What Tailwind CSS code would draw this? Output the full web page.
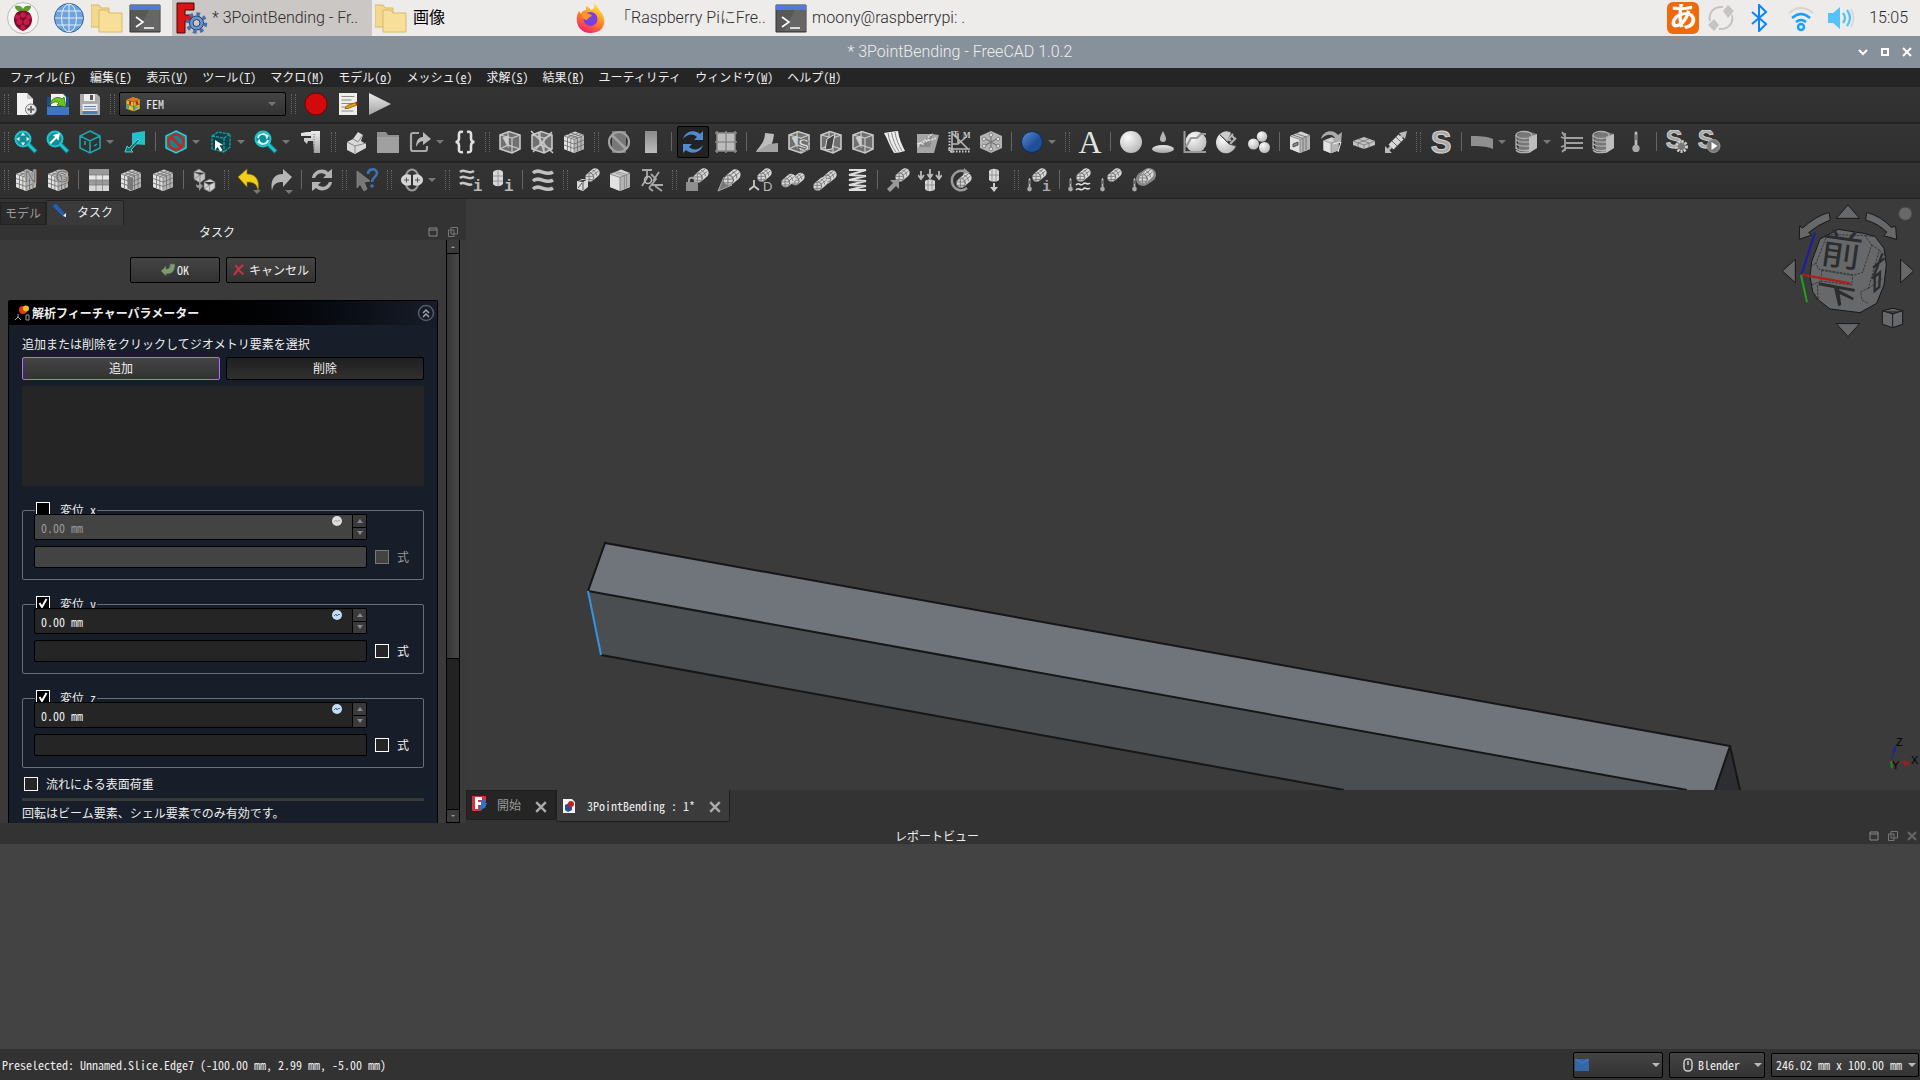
<!DOCTYPE html>
<html lang="ja">
<head>
    <meta charset="UTF-8">
    <script src="https://cdn.jsdelivr.net/npm/@tailwindcss/browser@4"></script>
    <title>3PointBending - FreeCAD 1.0.2</title>
</head>
<body class="h-screen flex flex-col overflow-hidden bg-[#333] text-[#eee] text-xs leading-4 font-['Noto_Sans_CJK_JP',sans-serif]">

    <!--Gradients-->
    <svg class="absolute w-0 h-0" aria-hidden="true">
        <defs>
            <linearGradient id="g" x1="0" y1="0" x2="0" y2="1"><stop offset="0" stop-color="#ececec"/><stop offset="1" stop-color="#a2a2a2"/></linearGradient>
            <linearGradient id="gd" x1="0" y1="0" x2="0" y2="1"><stop offset="0" stop-color="#8a8a8a"/><stop offset="1" stop-color="#bdbdbd"/></linearGradient>
            <radialGradient id="ball" cx=".35" cy=".3" r=".8"><stop offset="0" stop-color="#fafafa"/><stop offset="1" stop-color="#b4b4b4"/></radialGradient>
            <linearGradient id="blue" x1="0" y1="0" x2="1" y2="1"><stop offset="0" stop-color="#5a8fd4"/><stop offset=".6" stop-color="#1f4f98"/></linearGradient>
            <linearGradient id="fire" x1=".8" y1="0" x2=".3" y2="1"><stop offset="0" stop-color="#fff44f"/><stop offset=".5" stop-color="#ff8a1f"/><stop offset="1" stop-color="#f0206e"/></linearGradient>
        </defs>
    </svg>

    <!--Icon definitions-->
    <svg class="hidden" aria-hidden="true">
        <!--shared parts-->
        <symbol id="mcyl" viewBox="1 2 22 20"><path d="M8 15.500 16 8.500" stroke="#d8d8d8" stroke-width="13" stroke-linecap="round"/><g fill="none" stroke="#6c6c6c" stroke-width="1.100"><circle cx="7.500" cy="15.500" r="6"/><path d="M7 9.500v12M2 14h11M3 18.500h10M8 8c4 1 6 5 6 9M12 5c4 1 6 4 6 8M10 9l8-6M13 12l8-6"/></g></symbol>
        <symbol id="thermo" viewBox="0 0 8 24"><path d="M4 2v16" stroke="#bbb" stroke-width="3" stroke-linecap="round"/><path d="M4 4v6" stroke="#333" stroke-width="1"/><circle cx="4" cy="19" r="4" fill="#aaa"/></symbol>
        <symbol id="box" viewBox="0 0 24 24"><path d="M2 6 13 1.500 22 5v14l-10 4L2 19z" fill="#d2d2d2"/><path d="M2 6l10 3.500V23L2 19z" fill="#e2e2e2"/><path d="M12 9.500 22 5v14l-10 4z" fill="#b4b4b4"/><path d="M2 6l10 3.500L22 5M12 9.500V23" fill="none" stroke="#777" stroke-width=".8"/></symbol>
        <symbol id="mesh" viewBox="0 0 24 24"><use href="#box"/><path d="M2 10.500l10 3.500 10-4M2 15l10 3.500 10-4M5.500 7.500v13M8.800 8.500V22M15.500 8v13.500M19 6.500V20M5.500 4.500l10.500 3.500M9 3l10.500 3.500M5.500 7.300 16.500 3M9 8.600 19.500 4" fill="none" stroke="#6c6c6c" stroke-width=".8"/></symbol>
        <symbol id="mag" viewBox="0 0 24 24"><path d="M14 14l8 8" stroke="#0c6f75" stroke-width="5"/><path d="M14 14l7.500 7.500" stroke="#22c3cb" stroke-width="3"/><circle cx="9" cy="9" r="7.500" fill="#0e8f97" stroke="#22c3cb" stroke-width="2"/></symbol>
        <symbol id="wire" viewBox="0 0 24 24"><path d="M2 5 11 1.500 22 5v14l-8 4L2 19z" fill="#707070" stroke="#c8c8c8" stroke-width="1.600"/><path d="M2 5l12 3 8-3M14 8v15M2 19l8-4 12 4M10 15V2" fill="none" stroke="#c8c8c8" stroke-width="1.200"/></symbol>

        <!--file-->
        <symbol id="new" viewBox="0 0 24 24"><path d="M3 1h10l6 6v16H3z" fill="#f2f2f2"/><path d="M13 1v6h6z" fill="#c8c8c8"/><circle cx="17" cy="17.500" r="5.500" fill="#e8e8e8" stroke="#777"/><path d="M17 14v7M13.500 17.500h7" stroke="#666" stroke-width="1.800"/></symbol>
        <symbol id="open" viewBox="0 0 24 24"><path d="M1 5h4V1h13l3 4h2v18H1z" fill="#1d4c8c"/><path d="M5 2h12l3 3v9H5z" fill="#f2f2f2"/><path d="M1 15h22v8H1z" fill="#3d77bd"/><path d="M4 13c1-8 9-9 12-6l2-2 2 10-9-2 2-2c-3-2-6-1-9 2z" fill="#6cc020" stroke="#357010" stroke-width=".8"/></symbol>
        <symbol id="save" viewBox="0 0 24 24"><path d="M2 2h17l3 3v18H2z" fill="#a9a9a9"/><path d="M6 2h11v7H6z" fill="#eee"/><path d="M12 3h3v5h-3z" fill="#555"/><path d="M4.500 12h15v9h-15z" fill="#eaeaea"/><path d="M6 14.500h12M6 17h12" stroke="#5d83b5"/><path d="M4.500 19h15v3h-15z" fill="#4d7cb8"/></symbol>
        <symbol id="fem" viewBox="0 0 24 24"><path d="M2 6 12 2l10 3v14l-9 4L2 19z" fill="#e8c020"/><path d="M2 6l11 3 9-4-10-3z" fill="#e8761c"/><path d="M6 8h3v5H6zM16 8h4v5h-4z" fill="#d01818"/><path d="M2 14h4v5H2zM13 16h8l-8 6z" fill="#35a5c0"/><path d="M2 6l11 3v14M13 9l9-4M2 12l11 4 9-4" fill="none" stroke="#444" stroke-width=".8"/></symbol>
        <symbol id="rec" viewBox="0 0 24 24"><circle cx="12" cy="12" r="11" fill="#d40a0a" stroke="#6d0404"/></symbol>
        <symbol id="macro" viewBox="0 0 24 24"><path d="M3 1h18v22H3z" fill="#efefe8"/><path d="M5.500 4.500h13M5.500 8h10M5.500 11.500h12M5.500 15h5M5.500 19h12" stroke="#888"/><path d="M9 16.500l2-3 9-3 1 2.500-9 3.500z" fill="#e5a50a" stroke="#7a3c05" stroke-width=".7"/><path d="M19.500 10l2-.5.500 2.500-2 .5z" fill="#c21818"/></symbol>
        <symbol id="play" viewBox="0 0 24 24"><path d="M1 1l22 11L1 23z" fill="url(#g)"/></symbol>

        <!--view-->
        <symbol id="fitall" viewBox="0 0 24 24"><use href="#mag"/><path d="M9 2.500l2.200 3H6.800zM9 15.500l2.200-3H6.800zM2.500 9l3-2.200v4.400zM15.500 9l-3-2.200v4.400z" fill="#fff"/></symbol>
        <symbol id="fitsel" viewBox="0 0 24 24"><use href="#mag"/><path d="M5 14l-1.500-1.500L9 7 7 5l7-2-1.500 7.500L10.500 8.500z" fill="#fff"/></symbol>
        <symbol id="axo" viewBox="0 0 24 24"><path d="M12 1l10 5v12l-10 5L2 18V6zM2 6l10 5 10-5M12 11v12M7 11v4M16 16l3-2" fill="none" stroke="#1ba9b0" stroke-width="1.500"/></symbol>
        <symbol id="align" viewBox="0 0 24 24"><path d="M9 3l13-2v14l-13-1z" fill="#25bfc7"/><path d="M2 22l2-6 2 2 9-9 1.500 1.500L8 20l2 2z" fill="#11767c" stroke="#5fe6ec" stroke-width=".8"/></symbol>
        <symbol id="nodraw" viewBox="0 0 24 24"><path d="M12 1l10 5v12l-10 5L2 18V6z" fill="#12868d" stroke="#2acfd6" stroke-width="1.500"/><circle cx="12" cy="12" r="7.500" fill="none" stroke="#d02020" stroke-width="2.500"/><path d="M7 7l10 10" stroke="#d02020" stroke-width="2.500"/></symbol>
        <symbol id="selbox" viewBox="0 0 24 24"><path d="M3 6l6-4 12 2v13l-6 5-12-3zM3 6l12 2 6-4M15 8v14" fill="#0b4448" stroke="#1aa0a7" stroke-width="1.300" stroke-dasharray="3 1"/><path d="M6 10l8 5-3.500.5 3 4.500-2 1.500-3-4.500L6 20z" fill="#fff"/></symbol>
        <symbol id="zoomtool" viewBox="0 0 24 24"><use href="#mag"/><path d="M4 8c1-5 8-5 9-1l1-2M14 10c-1 5-8 5-9 1l-1 2" fill="none" stroke="#d6f6f7" stroke-width="2"/></symbol>
        <symbol id="caliper" viewBox="0 0 24 24"><path d="M2 3l6-1h4V1h9v22h-6l-1-12-5 0-1 3-3-3V8h7V6H2z" fill="url(#g)"/><path d="M15 4v16" stroke="#666" stroke-dasharray="1 1.500"/></symbol>

        <!--structure-->
        <symbol id="part" viewBox="0 0 24 24"><path d="M3 12l6-3 5-7 5 3-2 6 5 3v4l-11 6-8-4z" fill="#d8d8d8"/><path d="M3 12l8 4 11-3M11 16v7M9 9l5 3 5-7" fill="none" stroke="#888"/></symbol>
        <symbol id="folder" viewBox="0 0 24 24"><path d="M1 2h9l2 3h11v18H1z" fill="#8f8f8f"/><path d="M1 7h22v16H1z" fill="#a0a0a0"/></symbol>
        <symbol id="link" viewBox="0 0 24 24"><path d="M11 3H5q-2 0-2 2v14q0 2 2 2h12q2 0 2-2v-3" fill="none" stroke="#a8a8a8" stroke-width="2.200"/><path d="M8 17c0-8 4-10 7-10V2l8 7-8 6v-4c-3 0-5 2-7 6z" fill="#b8b8b8"/></symbol>
        <symbol id="braces" viewBox="0 0 24 24"><path d="M10 2C5 1 6 4 6 8c0 3-1 4-3.500 4C5 12 6 13 6 16c0 4-1 7 4 6M14 2c5-1 4 2 4 6 0 3 1 4 3.500 4-2.500 0-3.500 1-3.500 4 0 4 1 7-4 6" fill="none" stroke="#e0e0e0" stroke-width="2.600"/></symbol>

        <!--mesh display-->
        <symbol id="wirebox" viewBox="0 0 24 24"><use href="#wire"/><path d="M4.500 7.500l6 11V5.500z" fill="#ccc"/></symbol>
        <symbol id="wirex" viewBox="0 0 24 24"><use href="#wire"/><path d="M1 1l22 22M22 2 3 22M8 2l6 20" stroke="#c8c8c8" stroke-width="1.600"/></symbol>
        <symbol id="nosolid" viewBox="0 0 24 24"><path d="M5 1h14v22H5z" fill="#777"/><circle cx="12" cy="12" r="10" fill="none" stroke="#a2a2a2" stroke-width="2.200"/><path d="M5 5l14 14" stroke="#a2a2a2" stroke-width="2.500"/></symbol>
        <symbol id="plate" viewBox="0 0 24 24"><path d="M6 1h12v22H6z" fill="url(#gd)"/></symbol>
        <symbol id="sync" viewBox="0 0 24 24"><path d="M2 9C4 1 14-1 19 4l3-3v9h-9l3-3C12 3 6 4 2 9zM22 15c-2 8-12 10-17 5l-3 3v-9h9l-3 3c4 4 10 3 14-2z" fill="#4f8bd0"/></symbol>
        <symbol id="grid4" viewBox="0 0 24 24"><path d="M3 3h18v18H3z" fill="#bcbcbc"/><path d="M1 3h22M1 12h22M1 21h22M3 1v22M12 1v22M21 1v22" stroke="#8a8a8a" stroke-width="1.500"/></symbol>

        <!--post processing-->
        <symbol id="warp" viewBox="0 0 24 24"><path d="M1 22c2-5 9-9 9-19l9 1c-1 9-3 13-8 18z" fill="#bdbdbd"/><path d="M14 14l9-1v9H1z" fill="#a3a3a3"/></symbol>
        <symbol id="scut" viewBox="0 0 24 24"><use href="#wirebox"/><text x="11" y="21" font-size="17" font-weight="700" fill="#ddd" stroke="#555" stroke-width=".6" font-family="Liberation Sans">S</text></symbol>
        <symbol id="clip" viewBox="0 0 24 24"><use href="#wire"/><path d="M8 9l8-5-3 15-7 1z" fill="#444" stroke="#ddd"/></symbol>
        <symbol id="contour" viewBox="0 0 24 24"><path d="M1 3c6-1 11-2 14-2 1 8 4 14 7 20-4 1-8 2-11 2C7 17 5 10 1 3z" fill="#eee"/><path d="M5 3c1 8 4 13 8 19M8.500 2.500C10 10 12 15 16 21.500M12 2c1 8 4 13 7 19" fill="none" stroke="#888" stroke-width="1"/></symbol>
        <symbol id="probe" viewBox="0 0 24 24"><path d="M2 4h15l7 1-5 18H2z" fill="#a5a5a5"/><path d="M2 17 18 3l-3 14z" fill="#8a8a8a"/><path d="M3 17l2-4 3 1 1-4 4 0 1-4 4-2M2 14l20-6" fill="none" stroke="#e0e0e0" stroke-width="1.600" stroke-dasharray="2 1"/></symbol>
        <symbol id="plot" viewBox="0 0 24 24"><path d="M5 1v22M1 19h22M5 3l16 16M5 14h6l8-7M11 3v10" fill="none" stroke="#b8b8b8" stroke-width="1.600"/><path d="M2.500 2v19M3 21.500h20" stroke="#ccc" stroke-width="2" stroke-dasharray="1.500 1.500"/><text x="6" y="7" font-size="8" font-weight="700" fill="#ccc" font-family="Liberation Serif">T</text><text x="16" y="8" font-size="8" font-weight="700" fill="#ccc" font-family="Liberation Serif">M</text></symbol>
        <symbol id="glyphs" viewBox="0 0 24 24"><path d="M12 1l11 5v12l-11 5L1 18V6z" fill="#b4b4b4"/><g stroke="#777" stroke-width="1.200"><path d="M12 5v14M5 8l14 8M19 8 5 16"/></g><g fill="#ddd" stroke="#777" stroke-width=".8"><circle cx="12" cy="5" r="1.800"/><circle cx="5" cy="9" r="1.800"/><circle cx="19" cy="9" r="1.800"/><circle cx="5" cy="16" r="1.800"/><circle cx="19" cy="16" r="1.800"/><circle cx="12" cy="19" r="1.800"/></g></symbol>
        <symbol id="sphereb" viewBox="0 0 24 24"><circle cx="12" cy="12" r="10.500" fill="url(#blue)" stroke="#0d2b58"/></symbol>

        <!--model-->
        <symbol id="analysis" viewBox="0 0 24 24"><text x="12" y="23" font-size="32" text-anchor="middle" fill="#e4e4e4" font-family="Liberation Serif">A</text></symbol>
        <symbol id="ball1" viewBox="0 0 24 24"><circle cx="12" cy="12" r="11" fill="url(#ball)"/></symbol>
        <symbol id="fluid" viewBox="0 0 24 24"><ellipse cx="12" cy="19" rx="11" ry="4" fill="url(#g)"/><path d="M12 1c2 4 3 6 3 8a3 3 0 0 1-6 0c0-2 1-4 3-8z" fill="#b5b5b5"/></symbol>
        <symbol id="nonlin" viewBox="0 0 24 24"><circle cx="13" cy="12" r="10.500" fill="url(#ball)"/><path d="M1.500 1v21H23M3 17l5-9h6l4-4h5" fill="none" stroke="#999" stroke-width="2"/></symbol>
        <symbol id="reinf" viewBox="0 0 24 24"><path d="M5 4l9 10 7 2c-3 7-10 9-15 6C0 18-1 9 5 4z" fill="url(#ball)"/><path d="M5 4c4-4 9-3 11-1l-4 8z" fill="#ccc"/><path d="M12 11l6-7M15 14l6-6M14 9l2 2M17 6l3 3" stroke="#b5b5b5" stroke-width="2"/><path d="M5 5l9 9 7 2" fill="none" stroke="#555"/></symbol>
        <symbol id="balls3" viewBox="0 0 24 24"><circle cx="15" cy="6.500" r="5.200" fill="url(#ball)"/><circle cx="6.500" cy="14" r="5.500" fill="url(#ball)"/><circle cx="17.500" cy="17.500" r="5.500" fill="url(#ball)"/></symbol>
        <symbol id="egeom" viewBox="0 0 24 24"><use href="#box"/><path d="M5 5l10 3.500V22M8 3.500l10 3.500v13" fill="none" stroke="#777"/><path d="M5 14l5-2v3l-5 2z" fill="#888" stroke="#555"/></symbol>
        <symbol id="erot" viewBox="0 0 24 24"><use href="#box" x="2" y="6" width="18" height="18"/><path d="M1 9C3 0 14-1 18 5l4-3-1 11-9-3 3-2C12 3 6 4 1 9z" fill="#aaa"/><path d="M13 14l8-2-3 10" fill="none" stroke="#eee"/></symbol>
        <symbol id="eflat" viewBox="0 0 24 24"><path d="M1 11l11-4 11 4v4l-11 4-11-4z" fill="#c2c2c2"/><path d="M1 11l11 4 11-4M12 15v4M6 9l11 4v4M17 9 6 13v4" fill="none" stroke="#777" stroke-width=".8"/></symbol>
        <symbol id="eline" viewBox="0 0 24 24"><path d="M4 20 20 4" stroke="#b0b0b0" stroke-width="3"/><path d="M7 17 17 7" stroke="#d8d8d8" stroke-width="7"/><path d="M1 16l7 7H1zM15 3l8-2-2 8z" fill="#bbb"/><path d="M8 11l5 5M12 7l5 5" stroke="#666"/></symbol>
        <symbol id="solver" viewBox="0 0 24 24"><text x="12" y="23" font-size="31" font-weight="700" text-anchor="middle" fill="#a8a8a8" stroke="#d5d5d5" stroke-width="1" font-family="Liberation Sans">S</text></symbol>
        <symbol id="beam" viewBox="0 0 24 24"><path d="M1 6c8 0 15 0 22 3v10c-7-3-14-3-22-3z" fill="#8f8f8f"/></symbol>
        <symbol id="coilbox" viewBox="0 0 24 24"><path d="M2 4l10-3 10 3v14l-8 5-10-2z" fill="#777"/><path d="M14 7l8-3v14l-8 5z" fill="#bdbdbd"/><g fill="none" stroke="#b0b0b0" stroke-width="1.300"><ellipse cx="9" cy="5" rx="8" ry="3.500"/><path d="M1 5v14M1 9q2 4 13 3M1 13q2 4 13 3M1 17q2 5 13 3M1 20q3 4 13 2"/></g></symbol>
        <symbol id="flow" viewBox="0 0 24 24"><path d="M2 2l4 6h17M6 13h17M2 22l4-4h17M1 7l5 2M1 17l5-2M5 3v18" fill="none" stroke="#a0a0a0" stroke-width="1.800"/></symbol>
        <symbol id="heat" viewBox="0 0 24 24"><use href="#thermo" x="8" y="1" width="8" height="22"/></symbol>
        <symbol id="ssolve" viewBox="0 0 24 24"><text x="9" y="18" font-size="25" font-weight="700" text-anchor="middle" fill="#a5a5a5" stroke="#d5d5d5" stroke-width=".8" font-family="Liberation Sans">S</text><circle cx="16.500" cy="16.500" r="5" fill="#777" stroke="#ccc" stroke-width="3" stroke-dasharray="2 1.300"/></symbol>
        <symbol id="srun" viewBox="0 0 24 24"><text x="9" y="18" font-size="25" font-weight="700" text-anchor="middle" fill="#a5a5a5" stroke="#d5d5d5" stroke-width=".8" font-family="Liberation Sans">S</text><circle cx="16.500" cy="16" r="6.500" fill="#777" stroke="#999"/><path d="M14.500 12l6 4-6 4z" fill="#fff"/></symbol>

        <!--mesh tools-->
        <symbol id="meshn" viewBox="0 0 24 24"><use href="#mesh"/><text x="10" y="15" font-size="18" font-weight="700" fill="#777" stroke="#b5b5b5" stroke-width=".8" font-family="Liberation Sans">N</text></symbol>
        <symbol id="meshg" viewBox="0 0 24 24"><use href="#mesh"/><text x="9" y="15" font-size="18" font-weight="700" fill="#777" stroke="#b5b5b5" stroke-width=".8" font-family="Liberation Sans">G</text></symbol>
        <symbol id="layers" viewBox="0 0 24 24"><path d="M2 1h20v22H2z" fill="#9a9a9a"/><path d="M2 7h20v5H2z" fill="#e6e6e6"/><path d="M2 17h20v6H2z" fill="#d5d5d5"/><path d="M2 7h20M2 12h20M2 17h20M9 7v16M15.500 7v16" stroke="#777" stroke-width=".7"/></symbol>
        <symbol id="meshr" viewBox="0 0 24 24"><use href="#mesh"/><path d="M9 9l5 1v13l-5-2z" fill="#777"/></symbol>
        <symbol id="femmesh" viewBox="0 0 24 24"><path d="M2 4l5-3 6 4v6l-5 4-6-4zM2 4l6 3 5-2M8 7v8M2 11l6-4" fill="#c4c4c4" stroke="#777" stroke-width=".7"/><path d="M12 14l6-3 5 3v6l-5 4-6-3zM12 14l5 3 6-3M17 17l1 7M12 21l5-4" fill="#d4d4d4" stroke="#777" stroke-width=".7"/><path d="M4 16c0 3 1 4 3 4v3l4-5-4-4v3c-2 0-2 0-3-1z" fill="#999"/></symbol>
        <symbol id="undo" viewBox="0 0 24 24"><path d="M1 9l9-8v5c9 0 13 6 11 17-1-7-4-9-11-9v5z" fill="#f0cf1c" stroke="#8a7400" stroke-width=".6"/></symbol>
        <symbol id="redo" viewBox="0 0 24 24"><path d="M23 9l-9-8v5C5 6 1 12 3 23c1-7 4-9 11-9v5z" fill="#b5b5b5"/></symbol>
        <symbol id="refresh" viewBox="0 0 24 24"><path d="M2 10C3 2 13-1 18 4l4-3v9h-9l3-3C12 4 7 5 5 10zM22 14c-1 8-11 11-16 6l-4 3v-9h9l-3 3c4 3 9 2 11-3z" fill="#b2b2b2"/></symbol>
        <symbol id="whats" viewBox="0 0 24 24"><path d="M2 3l13 10-6 1 3 7-3 2-4-7-3 4z" fill="#777" stroke="#999" stroke-width=".6"/><path d="M13 6c0-6 9-6 9-1 0 4-5 4-5 9" fill="none" stroke="#3d71b2" stroke-width="2.600"/><circle cx="17" cy="18" r="1.800" fill="#3d71b2"/></symbol>
        <symbol id="cs" viewBox="0 0 24 24"><ellipse cx="12" cy="12" rx="7" ry="10.500" fill="none" stroke="#999" stroke-width="2"/><path d="M11 7v10c-5 2-10-1-10-5s5-7 10-5zM13 7v10c5 2 10-1 10-5s-5-7-10-5z" fill="#d5d5d5"/><path d="M4 12h5M6.500 9.500v5M15 12h5M17.500 9.500v5" stroke="#555"/></symbol>

        <!--constraints-->
        <symbol id="wavei" viewBox="0 0 24 24"><path d="M2 4c4-4 8 3 14-1M2 10c4-4 8 3 14-1M2 16c4-4 8 3 12 0" fill="none" stroke="#c8c8c8" stroke-width="2.500"/><text x="15" y="23" font-size="16" font-weight="700" fill="#bbb" font-family="Liberation Mono">i</text></symbol>
        <symbol id="canI" viewBox="0 0 24 24"><path d="M3 4c3-3 8-3 10 0v12c-3 3-8 3-10 0z" fill="#d8d8d8"/><path d="M8 2v16M3 8h10M3 13h10" stroke="#888" stroke-width=".8"/><text x="14" y="23" font-size="16" font-weight="700" fill="#bbb" font-family="Liberation Mono">i</text></symbol>
        <symbol id="waves" viewBox="0 0 24 24"><path d="M2 5c6-6 12 4 20-1M2 13c6-6 12 4 20-1M2 21c6-6 12 4 20-1" fill="none" stroke="#c0c0c0" stroke-width="3.600"/></symbol>
        <symbol id="elec" viewBox="0 0 24 24"><use href="#mcyl" x="9" y="0" width="15" height="14"/><path d="M1 13l6 1v9l-6-2zM7 14l5-3v8l-5 4M2 13l4-2 6 0" fill="#d8d8d8"/><path d="M2 20l4-5M7 14v8" stroke="#555"/></symbol>
        <symbol id="cube2" viewBox="0 0 24 24"><use href="#box"/><path d="M6 4.500l10.500 3.500v13M8 3.500l10.500 3v13" fill="none" stroke="#888" stroke-width=".8"/></symbol>
        <symbol id="tools" viewBox="0 0 24 24"><path d="M2 2h10M7 2v8l-5 8M11 6l5 5-7 9M12 17l11 0M13 13l6-9M15 18l7 5M9 20l4 3" fill="none" stroke="#a8a8a8" stroke-width="1.800"/><circle cx="8" cy="12" r="3.500" fill="none" stroke="#bbb" stroke-width="1.500"/></symbol>
        <symbol id="fix" viewBox="0 0 24 24"><use href="#mcyl" x="8" y="0" width="16" height="15"/><path d="M4 15v-3c0-3 6-3 6 0v3" fill="none" stroke="#aaa" stroke-width="1.800"/><path d="M1 14h12v9H1z" fill="#8e8e8e"/></symbol>
        <symbol id="rigid" viewBox="0 0 24 24"><path d="M1 23 7 9l8 8z" fill="#777" stroke="#aaa"/><use href="#mcyl" x="6" y="1" width="18" height="17"/></symbol>
        <symbol id="disp" viewBox="0 0 24 24"><use href="#mcyl" x="8" y="0" width="15" height="14"/><path d="M5 12v6l-5 4M5 18l5 4" fill="none" stroke="#c8c8c8" stroke-width="1.800"/><text x="14" y="23" font-size="13" fill="#bbb" font-family="Liberation Sans">D</text></symbol>
        <symbol id="contact" viewBox="0 0 24 24"><use href="#mcyl" x="10" y="4" width="14" height="14"/><use href="#mcyl" x="0" y="5" width="15" height="15"/></symbol>
        <symbol id="tie" viewBox="0 0 24 24"><use href="#mcyl" x="9" y="2" width="15" height="14"/><use href="#mcyl" x="0" y="9" width="15" height="14"/></symbol>
        <symbol id="spring" viewBox="0 0 24 24"><path d="M4 2h17L4 7l17 1-17 4 17 1-17 4 17 1-17 4h17" fill="none" stroke="#ddd" stroke-width="2"/></symbol>
        <symbol id="force" viewBox="0 0 24 24"><use href="#mcyl" x="9" y="0" width="15" height="14"/><path d="M1 21l6-6-3-3 9 0 0 9-3-3-6 6z" fill="#999"/></symbol>
        <symbol id="press" viewBox="0 0 24 24"><path d="M7 13c2-2 8-2 10 0v8c-2 3-8 3-10 0z" fill="#d8d8d8"/><path d="M10 12v11M14 12v11M7 17h10" stroke="#888" stroke-width=".8"/><path d="M12 1v8M3 3v7M21 3v7M9.500 6l2.500 4 2.500-4M0 7l3 4 3-4M18 7l3 4 3-4" fill="none" stroke="#bbb" stroke-width="1.800"/></symbol>
        <symbol id="centrif" viewBox="0 0 24 24"><path d="M16 4C8 0 1 7 2 14s9 11 15 6" fill="none" stroke="#999" stroke-width="2.500"/><path d="M14 0l6 5-7 3z" fill="#999"/><use href="#mcyl" x="6" y="5" width="16" height="15"/></symbol>
        <symbol id="grav" viewBox="0 0 24 24"><path d="M7 3c2-3 8-3 10 0v9c-2 2-8 2-10 0z" fill="#d8d8d8"/><path d="M10 1v13M14 1v13M7 7h10" stroke="#888" stroke-width=".8"/><path d="M12 15v5" stroke="#ccc" stroke-width="2"/><path d="M8 19h8l-4 5z" fill="#ccc"/></symbol>
        <symbol id="tinit" viewBox="0 0 24 24"><use href="#mcyl" x="5" y="0" width="15" height="14"/><use href="#thermo" x="0" y="10" width="5" height="14"/><text x="15" y="23" font-size="15" font-weight="700" fill="#aaa" font-family="Liberation Mono">i</text></symbol>
        <symbol id="tflux" viewBox="0 0 24 24"><use href="#mcyl" x="8" y="0" width="15" height="14"/><use href="#thermo" x="0" y="10" width="5" height="14"/><path d="M8 17c3-4 4 2 7-1s4 2 7-1M8 22c3-4 4 2 7-1s4 2 7-1" fill="none" stroke="#ddd" stroke-width="1.600"/></symbol>
        <symbol id="ttemp" viewBox="0 0 24 24"><use href="#mcyl" x="7" y="0" width="15" height="14"/><use href="#thermo" x="0" y="10" width="5" height="14"/></symbol>
        <symbol id="tbody" viewBox="0 0 24 24"><path d="M11 11l6-4" stroke="#888" stroke-width="14" stroke-linecap="round"/><use href="#mcyl" x="6" y="1" width="16" height="15"/><use href="#thermo" x="0" y="10" width="5" height="14"/></symbol>

        <!--desktop-->
        <symbol id="folders" viewBox="0 0 32 32"><path d="M0 3h8l2 3h8v19H0z" fill="#f2d98f" stroke="#d9b967"/><path d="M8 8h8l2 3h13v19H8z" fill="#f7df9a" stroke="#d9b967"/></symbol>
        <symbol id="term" viewBox="0 0 32 32"><path d="M1 3h30v27H1z" fill="#585858" stroke="#333"/><path d="M20 8h11v21H9z" fill="#707070" opacity=".6"/><path d="M1 3h30v5H1z" fill="#5577dd"/><path d="M7 15l7 5-7 5M15 26h10" fill="none" stroke="#fff" stroke-width="1.600"/></symbol>
        <symbol id="float" viewBox="0 0 10 10"><path d="M1 1h8v8H1zM1 3h8" fill="none" stroke="#888"/></symbol>
        <symbol id="dup" viewBox="0 0 10 10"><path d="M3 .5h6.500V7H3zM.5 3H6v6.500H.5z" fill="none" stroke="#777"/></symbol>
        <symbol id="x" viewBox="0 0 10 10"><path d="M1 1l8 8M9 1 1 9" stroke="currentColor" stroke-width="2"/></symbol>
    </svg>

    <!--Desktop panel-->
    <header class="flex h-9 shrink-0 items-center bg-[#edeceb] text-[#2b2b2b] text-base font-light font-[Roboto,'Noto_Sans_CJK_JP',sans-serif]">
        <div class="flex w-[172px] items-center pl-[7px]">
            <button aria-label="メニュー" class="mr-[14px]"><svg class="size-8" viewBox="0 0 32 32"><circle cx="16" cy="16" r="15.500" fill="#f4f4f4" stroke="#bbb"/><path d="M16 9c-5 1-8-1-8-5 4-1 7 0 8 3 1-3 4-4 8-3 0 4-3 6-8 5z" fill="#5aa02c"/><path d="M16 9c5-1 9 3 9 9 0 5-4 9-9 11-5-2-9-6-9-11 0-6 4-10 9-9z" fill="#7a0d2c"/><g fill="#c51a4a"><circle cx="16" cy="13" r="2.800"/><circle cx="10.500" cy="15" r="2.500"/><circle cx="21.500" cy="15" r="2.500"/><circle cx="12.500" cy="20" r="3"/><circle cx="19.500" cy="20" r="3"/><circle cx="16" cy="25.500" r="2.500"/></g></svg></button>
            <button aria-label="ブラウザ" class="mr-[6px]"><svg class="size-8" viewBox="0 0 32 32"><circle cx="16" cy="16" r="14.500" fill="#6ea3dc" stroke="#30639e"/><path d="M2 16h28M16 2v28M4 9h24M4 23h24" stroke="#e4eefa" fill="none"/><ellipse cx="16" cy="16" rx="7.500" ry="14" fill="none" stroke="#e4eefa"/></svg></button>
            <button aria-label="ファイル" class="mr-[6px]"><svg class="size-8"><use href="#folders"/></svg></button>
            <button aria-label="ターミナル"><svg class="size-8"><use href="#term"/></svg></button>
        </div>
        <button class="flex h-9 w-[200px] items-center gap-1 bg-[#cbc7c4] px-1 whitespace-nowrap">
            <svg class="size-8 shrink-0" viewBox="0 0 32 32"><path d="M1 1h17v7H9v5h7v6H9v12H1z" fill="#d81414" stroke="#4a0505"/><circle cx="20.500" cy="21" r="7" fill="#6f94c9" stroke="#1c3b70"/><circle cx="20.500" cy="21" r="9" fill="none" stroke="#476fa9" stroke-width="3.500" stroke-dasharray="3.600 3.400"/><circle cx="20.500" cy="21" r="3.500" fill="#cbc7c4" stroke="#1c3b70"/></svg>
            * 3PointBending - Fr..
        </button>
        <button class="flex h-9 w-[200px] items-center gap-1.5 px-[3px] whitespace-nowrap font-normal text-black"><svg class="size-8"><use href="#folders"/></svg>画像</button>
        <button class="flex h-9 w-[200px] items-center gap-2 px-[3px] whitespace-nowrap">
            <svg class="size-8 shrink-0" viewBox="0 0 32 32"><path d="M19 1c5 4 4 6 7 9 5 5 6 21-10 21C2 31-1 17 4 9l2 3c1-3 3-4 5-4l0-4c3 1 4 3 5 4 3-1 4-3 3-7z" fill="url(#fire)"/><circle cx="15.500" cy="17" r="7" fill="#7a3fe0"/><path d="M7 12c5-2 9 0 10 2-3 1-4 2-5 4-3 0-5-3-5-6z" fill="#ff9a1f"/></svg>
            「Raspberry PiにFre..
        </button>
        <button class="flex h-9 w-[200px] items-center gap-[5px] px-[3px] whitespace-nowrap"><svg class="size-8"><use href="#term"/></svg>moony@raspberrypi: .</button>
        <div class="ml-auto flex items-center pr-3">
            <span class="mr-2 grid size-8 place-items-center rounded-md bg-[#ef6a0a] text-[28px] leading-8 font-bold text-white">あ</span>
            <svg class="mr-4 size-7" viewBox="0 0 28 28"><g fill="none" stroke="#c4c4c4" stroke-width="2"><path d="M3 17C1 9 7 2 16 3M25 11c2 8-4 15-13 14"/></g><path d="M21 1l6 6-6 7-5-7zM7 15l5 6-5 6-6-6z" fill="#c4c4c4"/></svg>
            <svg class="mr-5 h-7 w-4" viewBox="0 0 16 28"><path d="M1 8l14 12-7 7V1l7 7L1 20" fill="none" stroke="#0a84ff" stroke-width="2"/></svg>
            <svg class="mr-3 size-7" viewBox="0 0 28 28"><path d="M2 9q12-10 24 0" fill="none" stroke="#d5d5d5" stroke-width="2"/><path d="M5 14q9-8 18 0M9 18q5-4 10 0" fill="none" stroke="#1a9fff" stroke-width="2.500"/><circle cx="14" cy="23" r="3" fill="none" stroke="#1a9fff" stroke-width="2.500"/></svg>
            <svg class="mr-3.5 size-7" viewBox="0 0 28 28"><path d="M1 9h5l7-6v22l-7-6H1z" fill="#55c3fb"/><path d="M16 9q4 5 0 10M20 6q6 8 0 16" fill="none" stroke="#55c3fb" stroke-width="2.300"/><path d="M24 5q5 9 0 18" fill="none" stroke="#d8d8d8" stroke-width="2"/></svg>
            <span>15:05</span>
        </div>
    </header>

    <!--Window title-->
    <div class="relative flex h-8 shrink-0 items-center justify-center bg-[#87919b] text-base font-light text-[#eee] font-[Roboto,sans-serif]">
        * 3PointBending - FreeCAD 1.0.2
        <div class="absolute right-2 flex gap-3 text-white">
            <button aria-label="最小化"><svg class="size-2.5" viewBox="0 0 10 10"><path d="M1 3l4 4 4-4" fill="none" stroke="#fff" stroke-width="2"/></svg></button>
            <button aria-label="最大化"><svg class="size-2.5" viewBox="0 0 10 10"><path d="M2 2h6v6H2z" fill="none" stroke="#fff" stroke-width="2"/></svg></button>
            <button aria-label="閉じる"><svg class="size-2.5"><use href="#x"/></svg></button>
        </div>
    </div>

    <nav id="menu" class="flex h-[19px] shrink-0 items-center bg-[#252525] pb-0.5 pl-[3px]"></nav>

    <!--Toolbars-->
    <div class="flex h-[37px] shrink-0 items-center border-b-2 border-[#232323] bg-linear-to-b from-[#343434] to-[#2f2f2f] pb-0.5">
        <div class="flex" data-icons="first new open save handle"></div>
        <label class="relative mr-px flex items-center">
            <svg class="absolute left-1.5 size-4"><use href="#fem"/></svg>
            <select aria-label="ワークベンチ" class="h-6 w-[167px] appearance-none rounded-xs border border-black bg-linear-to-b from-[#444] to-[#333] pl-[26px] [font-feature-settings:'hwid']"><option>FEM</option></select>
            <svg class="absolute right-2.5 size-2" viewBox="0 0 8 8"><path d="M0 2h8L4 6z" fill="#777"/></svg>
        </label>
        <div class="flex" data-icons="handle rec macro play"></div>
    </div>
    <div class="flex h-[39px] shrink-0 items-center border-b-2 border-[#232323] bg-linear-to-b from-[#343434] to-[#2f2f2f] pb-0.5">
        <div class="flex" data-icons="first fitall fitsel axo arrow align sep nodraw arrow selbox arrow zoomtool arrow caliper handle part folder link arrow braces handle wirebox wirex mesh handle nosolid plate sep sync* grid4 sep warp scut clip wirebox contour probe plot glyphs sep sphereb arrow handle analysis sep ball1 fluid nonlin reinf balls3 sep egeom erot eflat eline handle solver sep beam arrow coilbox arrow flow coilbox heat sep ssolve srun"></div>
    </div>
    <div class="flex h-9 shrink-0 items-center border-b border-[#232323] bg-linear-to-b from-[#343434] to-[#2f2f2f] pb-0.5">
        <div class="flex" data-icons="first meshn meshg sep layers meshr mesh sep femmesh handle undo+ redo+ sep refresh handle whats handle cs arrow handle wavei canI sep waves handle elec cube2 tools handle fix rigid disp contact tie spring sep force press centrif grav handle tinit sep tflux ttemp tbody"></div>
    </div>

    <main class="flex min-h-0 flex-1">
        <!--Combo view-->
        <aside class="flex w-[466px] shrink-0 flex-col bg-[#333]">
            <div class="flex h-[26px] items-end">
                <button class="h-[23px] w-[46px] border border-[#222] bg-[#2b2b2b] pb-0.5 text-[#999]">モデル</button>
                <button class="flex h-[25px] w-[78px] items-center gap-2.5 rounded-t-xs border border-b-0 border-[#222] bg-[#3a3a3a] px-1 pb-0.5">
                    <svg class="mb-1 size-4" viewBox="0 0 16 16"><path d="M1 4l4-3 9 10 1 4-4-1z" fill="#2a5ea8" stroke="#163763" stroke-width=".6"/><path d="M12 14l3-3v4z" fill="#fff"/></svg>タスク
                </button>
            </div>
            <div class="relative flex h-[15px] items-center justify-center pr-8 pb-0.5">
                タスク
                <div class="absolute right-2 flex gap-2.5">
                    <button aria-label="ドッキング"><svg class="size-2.5"><use href="#float"/></svg></button>
                    <button aria-label="フロート"><svg class="size-2.5"><use href="#dup"/></svg></button>
                </div>
            </div>
            <div class="flex min-h-0 flex-1 bg-[#3a3a3a] pr-1.5">
                <div class="flex min-w-0 flex-1 flex-col overflow-hidden px-2 pt-[17px]">
                    <div class="flex justify-center gap-1.5">
                        <button class="flex h-[26px] w-[90px] items-center justify-center gap-0.5 rounded-xs border border-black bg-linear-to-b from-[#454545] to-[#323232]">
                            <svg class="size-3.5" viewBox="0 0 14 14"><path d="M0 8l5-5v3c3 0 4-1 4-5h5c0 7-3 10-9 10v2z" fill="#7d9a70" stroke="#526a48" stroke-width=".6"/></svg><span class="[font-feature-settings:'hwid']">OK</span>
                        </button>
                        <button class="flex h-[26px] w-[90px] items-center justify-center gap-1 rounded-xs border border-black bg-linear-to-b from-[#454545] to-[#323232]">
                            <svg class="size-3" viewBox="0 0 14 14"><path d="M3 1c2 4 5 8 9 11M12 1C8 4 4 9 1 13" fill="none" stroke="#c2353f" stroke-width="2.500"/></svg>キャンセル
                        </button>
                    </div>
                    <section class="mt-[17px] flex-1 rounded-t-xs border border-b-0 border-black bg-[#171d29]">
                        <h2 class="flex h-6 items-center gap-px bg-linear-to-r from-black from-30% to-[#171d29] pr-0.5 pl-1.5 font-bold">
                            <svg class="size-4" viewBox="0 0 16 16"><circle cx="8" cy="5" r="4" fill="#e03a12"/><circle cx="11" cy="3.500" r="3" fill="#f0c020"/><path d="M3 9v3l-3 3M3 12l3 3" fill="none" stroke="#aaa"/><path d="M11 10h3v5h-3z" fill="none" stroke="#999"/></svg>
                            解析フィーチャーパラメーター
                            <button aria-label="折りたたむ" class="ml-auto"><svg class="size-[18px]" viewBox="0 0 18 18"><circle cx="9" cy="9" r="7.500" fill="none" stroke="#555a66" stroke-width="1.500"/><path d="M6 9l3-3 3 3M6 13l3-3 3 3" fill="none" stroke="#a0a4ad" stroke-width="1.500"/></svg></button>
                        </h2>
                        <div class="px-[13px] pt-[11px]">
                            <p class="mb-[5px]">追加または削除をクリックしてジオメトリ要素を選択</p>
                            <div class="grid grid-cols-2 gap-1.5">
                                <button class="h-[23px] rounded-xs border border-[#a970ff] bg-linear-to-b from-[#454545] to-[#323232] pb-px">追加</button>
                                <button class="h-[23px] rounded-xs border border-black bg-linear-to-b from-[#202020] to-[#303030] pb-px">削除</button>
                            </div>
                            <div class="mt-1.5 h-[100px] bg-[#252525]"></div>
                            <div id="groups" class="flex flex-col gap-6 pt-6"></div>
                            <label class="mt-1.5 flex h-5 items-center gap-2 pl-0.5"><input type="checkbox" class="size-3.5 appearance-none border border-white bg-[#252525]">流れによる表面荷重</label>
                            <hr class="mt-1 mb-1 h-[3px] border-0 bg-[#3a3a3a]">
                            <p>回転はビーム要素、シェル要素でのみ有効です。</p>
                        </div>
                    </section>
                </div>
                <div class="flex w-3.5 flex-col border-x border-black bg-[#222]">
                    <button aria-label="上へ" class="grid h-3.5 place-items-center border-b border-black bg-[#3a3a3a]"><svg class="size-1" viewBox="0 0 4 4"><path d="M0 3l2-2 2 2z" fill="#999"/></svg></button>
                    <div class="flex-1"><div class="h-[73%] border-b border-black bg-linear-to-r from-[#353535] to-[#484848]"></div></div>
                    <button aria-label="下へ" class="grid h-3.5 place-items-center border-y border-black bg-[#3a3a3a]"><svg class="size-1" viewBox="0 0 4 4"><path d="M0 1l2 2 2-2z" fill="#999"/></svg></button>
                </div>
            </div>
        </aside>

        <!--3D view-->
        <section class="flex min-w-0 flex-1 flex-col bg-[#333]">
            <div class="min-h-0 flex-1 bg-[#3b3b3b]">
                <svg class="size-full" viewBox="466 199 1454 591" preserveAspectRatio="xMaxYMin slice">
                    <path d="M605 543 1730 746 1715 790H1687L588 591z" fill="#70757c"/>
                    <path d="M588 591 1687 790H1344L601 655z" fill="#4a4e50"/>
                    <path d="M1730 746l10 44h-25z" fill="#2c2e31"/>
                    <path d="M588 591 605 543 1730 746 1715 790M588 591 1687 790M601 655 1344 790M1730 746l10 44" fill="none" stroke="#161616" stroke-width="2"/>
                    <path d="M588 591 601 655" stroke="#3594e6" stroke-width="2"/>
                    <!--navigation cube-->
                    <g transform="translate(1740 195) scale(.3333)" stroke="#161616" stroke-width="3" fill="#66686a">
                        <path d="M324 30l35 40h-70zM289 386h70l-35 39zM166 193v70l-39-35zM482 193v70l39-35z"/>
                        <circle cx="496" cy="56" r="20" stroke="#444"/>
                        <path d="M271 75 267 52Q225 65 188 99L179 93 178 133 215 120 206 113Q235 88 271 75zM377 75 380 52Q425 65 454 97L467 94 470 133 431 122 441 112Q415 86 377 75z"/>
                        <path d="M427 347l32-7 29 7v41l-30 10-31-10zM427 347l31 10 30-10M458 357v41"/>
                        <path d="M240 132 295 103 370 115 405 124 432 160 439 210 432 270 410 325 360 353 270 342 235 315 218 290 210 245 215 200z"/>
                        <g fill="none" stroke-width="2" stroke="#222" stroke-dasharray="8 3">
                            <path d="M262 118 375 122 395 150 368 232 345 240 235 222 228 205zM245 226 338 242 336 270 243 258zM228 205 215 212M243 258 215 270M395 150 418 165 385 280 362 290 366 315 385 325M418 165 432 180M385 280 428 250M232 270 235 315M375 122 400 125"/>
                        </g>
                        <g fill="#2a2c2e" stroke="none" font-family="'Noto Sans CJK JP', sans-serif">
                            <text x="242" y="212" font-size="124" transform="rotate(8 310 170)">前</text>
                            <path d="M236 262 345 282 343 290 236 271zM282 278l14-2 8 54-9 4zM296 284l45 24-2 8-42-20z"/>
                        </g>
                        <path d="M399 218 433 190M427 176 398 252M404 246 420 232 418 276 404 288z" fill="none" stroke="#2a2c2e" stroke-width="7"/>
                        <path d="M225 113 185 237" stroke="#1a1ab0" stroke-width="6"/>
                        <path d="M185 239l146 26" stroke="#b01c1c" stroke-width="7"/>
                        <path d="M183 240l18 82" stroke="#1fa01f" stroke-width="6"/>
                    </g>
                    <!--axis cross-->
                    <g font-size="11" font-family="'Liberation Sans', sans-serif" fill="#000">
                        <path d="M1891 761l4-14" stroke="#22229a"/><path d="M1892 751l4-6 0 7z" fill="#22229a"/>
                        <path d="M1891 761l16 2" stroke="#962020"/><path d="M1904 760l7 4-7 2z" fill="#962020"/>
                        <path d="M1891 761l1 7" stroke="#208a20" stroke-width="2"/>
                        <text x="1896" y="746">Z</text><text x="1911" y="764">X</text><text x="1892" y="769">Y</text>
                    </g>
                </svg>
            </div>
            <div class="flex h-[33px] items-start">
                <div class="flex h-[30px] w-[90px] items-center rounded-b-xs border border-[#1f1f1f] bg-[#252525] pl-1 text-[#999]">
                    <svg class="mr-2.5 mb-1 size-4" viewBox="0 0 16 16"><path d="M1 1h14v6l-5 9H1z" fill="#d03540"/><path d="M10 5h4v3h2l-2 5-6 2z" fill="#2b76c8"/><path d="M4 2h7v3H7v2h3v3H7v4H4z" fill="#fff"/></svg>
                    開始
                    <button aria-label="タブを閉じる" class="mt-1 mr-2 ml-auto text-[#aaa]"><svg class="size-3"><use href="#x"/></svg></button>
                </div>
                <div class="flex h-8 w-[174px] items-center rounded-b-xs border border-t-0 border-[#1f1f1f] bg-[#3b3b3b] pl-1">
                    <svg class="mr-2.5 size-4" viewBox="0 0 16 16"><path d="M2 1h9l3 3v11H2z" fill="#f4f4f4"/><path d="M4 7l4-2 3 2v5l-4 2-3-2z" fill="#2a4f8c"/><circle cx="10" cy="6" r="3" fill="#c81e1e"/></svg>
                    <span class="[font-feature-settings:'hwid']">3PointBending : 1*</span>
                    <button aria-label="タブを閉じる" class="mt-0.5 mr-2 ml-auto text-[#aaa]"><svg class="size-3"><use href="#x"/></svg></button>
                </div>
            </div>
        </section>
    </main>

    <!--Report view-->
    <section class="flex h-[226px] shrink-0 flex-col">
        <div class="relative flex h-[21px] items-center justify-center pt-1 pr-[46px]">
            レポートビュー
            <div class="absolute right-[3px] flex gap-[9px] text-[#666]">
                <button aria-label="ドッキング"><svg class="size-2.5"><use href="#float"/></svg></button>
                <button aria-label="フロート"><svg class="size-2.5"><use href="#dup"/></svg></button>
                <button aria-label="閉じる"><svg class="size-2.5"><use href="#x"/></svg></button>
            </div>
        </div>
        <div class="flex-1 bg-[#434343]"></div>
    </section>

    <!--Status bar-->
    <footer class="flex h-[31px] shrink-0 items-center gap-1.5 bg-[#323232] pr-px pl-0.5 [font-feature-settings:'hwid']">
        <span class="mr-auto">Preselected: Unnamed.Slice.Edge7 (-100.00 mm, 2.99 mm, -5.00 mm)</span>
        <label class="relative flex items-center">
            <svg class="absolute left-0.5 h-3 w-3.5" viewBox="0 0 14 12"><path d="M0 0h14v12H0z" fill="#3566a8"/><path d="M0 0l7 4 7-4" fill="none" stroke="#5583c0" stroke-width=".8"/></svg>
            <select aria-label="通知" class="h-[26px] w-[90px] appearance-none rounded-xs border border-black bg-linear-to-b from-[#444] to-[#333]"><option></option></select>
            <svg class="absolute right-[3px] size-2" viewBox="0 0 8 8"><path d="M0 2h8L4 6z" fill="#bbb"/></svg>
        </label>
        <label class="relative flex items-center">
            <svg class="absolute left-3.5 h-3.5 w-2.5" viewBox="0 0 10 14"><rect x="1" y="1" width="8" height="12" rx="3.500" fill="none" stroke="#ccc" stroke-width="1.500"/><path d="M5 3v4" stroke="#ccc" stroke-width="1.500"/></svg>
            <select aria-label="ナビゲーション" class="h-[26px] w-24 appearance-none rounded-xs border border-black bg-linear-to-b from-[#444] to-[#333] pl-7 [font-feature-settings:'hwid']"><option>Blender</option></select>
            <svg class="absolute right-[3px] size-2" viewBox="0 0 8 8"><path d="M0 2h8L4 6z" fill="#bbb"/></svg>
        </label>
        <label class="relative flex items-center">
            <select aria-label="寸法" class="h-6 w-[148px] appearance-none rounded-xs border border-black bg-linear-to-b from-[#444] to-[#333] pl-1 [font-feature-settings:'hwid']"><option>246.02 mm x 100.00 mm</option></select>
            <svg class="absolute right-[3px] size-2" viewBox="0 0 8 8"><path d="M0 2h8L4 6z" fill="#bbb"/></svg>
        </label>
    </footer>

    <script>
        // Menu bar: label and mnemonic key
        const menus = [['ファイル', 'F'], ['編集', 'E'], ['表示', 'V'], ['ツール', 'T'], ['マクロ', 'M'], ['モデル', 'o'], ['メッシュ', 'e'], ['求解', 'S'], ['結果', 'R'], ['ユーティリティ', ''], ['ウィンドウ', 'W'], ['ヘルプ', 'H']];
        document.getElementById('menu').innerHTML = menus.map(([label, key]) =>
            `<button class="px-[7px] whitespace-nowrap">${label}${key ? `<span class="[font-feature-settings:'hwid']">(<u>${key}</u>)</span>` : ''}</button>`).join('');

        // Toolbars: "*" is a pressed button, "+" has a drop-down mark under the icon
        const arrow = '<svg class="size-2" viewBox="0 0 8 8"><path d="M0 2h8L4 6z" fill="#777"/></svg>';
        const special = {
            first: '<span class="flex w-2.5 items-center justify-end pr-px"><i class="h-5 w-[5px] border-x border-dotted border-[#666]"></i></span>',
            handle: '<span class="flex w-[13px] items-center justify-center"><i class="h-5 w-[5px] border-x border-dotted border-[#666]"></i></span>',
            sep: '<span class="flex w-[9px] items-center justify-center"><i class="h-[19px] w-px bg-[#666]"></i></span>',
            arrow: `<button aria-label="メニューを開く" class="flex w-[13px] items-center">${arrow}</button>`
        };
        document.querySelectorAll('[data-icons]').forEach(bar => {
            bar.innerHTML = bar.dataset.icons.split(' ').map(name => {
                if (special[name]) return special[name];
                const id = name.replace(/[*+]/, '');
                const icon = `<svg class="size-6"><use href="#${id}"/></svg>`;
                if (name.endsWith('*')) return `<button aria-label="${id}" class="mx-px grid size-8 place-items-center rounded-xs border border-black bg-[#222]">${icon}</button>`;
                if (name.endsWith('+')) return `<button aria-label="${id}" class="relative grid size-8 place-items-center">${icon}<span class="absolute right-1 bottom-0">${arrow}</span></button>`;
                return `<button aria-label="${id}" class="grid size-8 place-items-center">${icon}</button>`;
            }).join('');
        });

        // Displacement groups
        document.getElementById('groups').innerHTML = ['x', 'y', 'z'].map(axis => {
            const off = axis === 'x';
            const field = off ? 'bg-[#434343] text-[#999]' : 'bg-[#252525] text-[#eee]';
            return `<div class="relative flex h-[70px] flex-col gap-1.5 rounded-xs border border-[#6b6e75] pt-[3px] pl-[11px]">
                <label class="absolute -top-[9px] left-3 flex h-3 items-start gap-2.5 overflow-hidden bg-[#171d29] px-px">
                    <span class="relative"><input type="checkbox" class="block size-3.5 appearance-none border border-white bg-black" ${off ? '' : 'checked'}>${off ? '' : '<svg class="absolute inset-0 size-3.5" viewBox="0 0 14 14"><path d="M3.500 7l2.500 4 4.500-8" fill="none" stroke="#fff" stroke-width="2"/></svg>'}</span>
                    <span>変位<span class="ml-1.5 [font-feature-settings:'hwid']">${axis}</span></span>
                </label>
                <div class="relative flex h-[26px] w-[333px]">
                    <input type="text" aria-label="変位 ${axis}" value="0.00 mm" ${off ? 'disabled' : ''} class="min-w-0 flex-1 rounded-l-xs border border-black px-1.5 pt-0.5 [font-feature-settings:'hwid'] ${field}">
                    <svg class="absolute top-[2px] right-[25px] size-2.5" viewBox="0 0 10 10"><circle cx="5" cy="5" r="5" fill="${off ? '#ddd' : '#c6dcf2'}"/><path d="M2 6l2-2 1 2 2-2 1 1" fill="none" stroke="${off ? '#aaa' : '#3a6ea8'}"/></svg>
                    <div class="flex w-3.5 flex-col rounded-r-xs border border-l-0 border-black bg-[#3a3a3a]">
                        <button aria-label="増やす" class="grid flex-1 place-items-center border-b border-black"><svg class="size-1.5" viewBox="0 0 6 6"><path d="M0 5l3-4 3 4z" fill="#888"/></svg></button>
                        <button aria-label="減らす" class="grid flex-1 place-items-center"><svg class="size-1.5" viewBox="0 0 6 6"><path d="M0 1l3 4 3-4z" fill="#888"/></svg></button>
                    </div>
                </div>
                <div class="flex items-center gap-2">
                    <input type="text" aria-label="変位 ${axis} の式" ${off ? 'disabled' : ''} class="h-[22px] w-[333px] rounded-xs border border-black px-1.5 ${field}">
                    <label class="flex items-center gap-2 ${off ? 'text-[#999]' : ''}"><input type="checkbox" ${off ? 'disabled' : ''} class="size-3.5 appearance-none border ${off ? 'border-[#777] bg-[#434343]' : 'border-white bg-[#252525]'}">式</label>
                </div>
            </div>`;
        }).join('');
    </script>
</body>
</html>
